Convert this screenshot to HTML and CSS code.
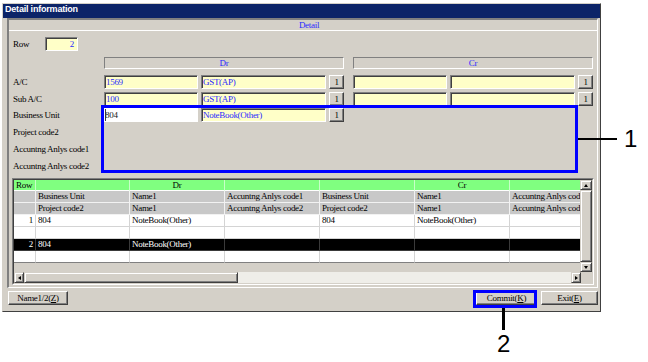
FILE: index.html
```html
<!DOCTYPE html>
<html lang="en">
<head>
  <meta charset="UTF-8">
  <title>Detail information</title>
  <link rel="stylesheet" href="styles.css">
</head>
<body>
  <div class="window">
    <div class="titlebar">Detail information</div>
    <div class="frame">
      <div class="band">Detail</div>
      <div class="form">
        <div class="rowline">
          <span class="rowlbl">Row</span>
          <span class="field yellow num">2</span>
        </div>
        <div class="line heads">
          <span class="label"></span>
          <div class="head">Dr</div>
          <div class="head cr">Cr</div>
        </div>
        <div class="line ac">
          <span class="label">A/C</span>
          <div class="side">
            <span class="field yellow code">1569</span>
            <span class="field yellow name">GST(AP)</span>
            <span class="btn small">1</span>
          </div>
          <div class="side cr">
            <span class="field yellow code"></span>
            <span class="field yellow name"></span>
            <span class="btn small">1</span>
          </div>
        </div>
        <div class="line sub">
          <span class="label">Sub A/C</span>
          <div class="side">
            <span class="field yellow code">100</span>
            <span class="field yellow name">GST(AP)</span>
            <span class="btn small">1</span>
          </div>
          <div class="side cr">
            <span class="field yellow code"></span>
            <span class="field yellow name"></span>
            <span class="btn small">1</span>
          </div>
        </div>
        <div class="line bu">
          <span class="label">Business Unit</span>
          <div class="side">
            <span class="field edit code">804</span>
            <span class="field yellow name">NoteBook(Other)</span>
            <span class="btn small">1</span>
          </div>
        </div>
        <div class="line plain"><span class="label">Project code2</span></div>
        <div class="line plain"><span class="label">Accuntng Anlys code1</span></div>
        <div class="line plain"><span class="label">Accuntng Anlys code2</span></div>
      </div>

      <div class="grid">
        <div class="grid-inner">
          <div class="grid-top">
            <div class="viewport">
              <div class="gr hd"><span>Row</span><span></span><span class="mid">Dr</span><span></span><span></span><span class="mid">Cr</span><span></span></div>
              <div class="gr gy"><span></span><span>Business Unit</span><span>Name1</span><span>Accuntng Anlys code1</span><span>Business Unit</span><span>Name1</span><span>Accuntng Anlys code1</span></div>
              <div class="gr gy"><span></span><span>Project code2</span><span>Name1</span><span>Accuntng Anlys code2</span><span>Project code2</span><span>Name1</span><span>Accuntng Anlys code2</span></div>
              <div class="gr wt"><span class="no">1</span><span>804</span><span>NoteBook(Other)</span><span></span><span>804</span><span>NoteBook(Other)</span><span></span></div>
              <div class="gr wt"><span></span><span></span><span></span><span></span><span></span><span></span><span></span></div>
              <div class="gr bk"><span class="no">2</span><span>804</span><span>NoteBook(Other)</span><span></span><span></span><span></span><span></span></div>
              <div class="gr wt last"><span></span><span></span><span></span><span></span><span></span><span></span><span></span></div>
              <div class="filler"></div>
            </div>
            <div class="vscroll">
              <span class="sbtn"><i class="tri up"></i></span>
              <span class="vthumb"></span>
              <span class="sbtn"><i class="tri down"></i></span>
            </div>
          </div>
          <div class="grid-bottom">
            <div class="hscroll">
              <span class="sbtn"><i class="tri left"></i></span>
              <span class="hthumb"></span>
              <span class="htrack"></span>
              <span class="sbtn"><i class="tri right"></i></span>
            </div>
            <div class="corner"></div>
          </div>
        </div>
      </div>
    </div>

    <div class="actions">
      <span class="btn wide">Name1/2(<u>Z</u>)</span>
      <span class="btn commit">Commit(<u>K</u>)</span>
      <span class="btn exit">Exit(<u>E</u>)</span>
    </div>
  </div>

  <!-- callouts -->
  <div class="callout box-1"></div>
  <div class="lead lead-1"></div>
  <div class="callnum num-1">1</div>
  <div class="callout box-2"></div>
  <div class="lead lead-2"></div>
  <div class="callnum num-2">2</div>
</body>
</html>
```

FILE: styles.css
```css
body {
  margin: 0;
  background: #fff;
  font-family: "Liberation Serif", serif;
  font-size: 9px;
  letter-spacing: -0.3px;
  color: #000;
}

.window {
  margin: 3px 0 0 2px;
  width: 599px;
  height: 309px;
  box-sizing: border-box;
  background: #d4d0c8;
  border: 1px solid;
  border-color: #d4d0c8 #404040 #404040 #d4d0c8;
}

.titlebar {
  height: 14px;
  line-height: 14px;
  padding-left: 2px;
  background: #0c2468;
  color: #fff;
  font: bold 9px "Liberation Sans", sans-serif;
  letter-spacing: -0.2px;
}

.frame {
  margin: 0 2px 0 4px;
  height: 270px;
  box-sizing: border-box;
  border-top: 2px solid #808080;
  border-left: 2px solid #808080;
  border-right: 1px solid #fff;
  border-bottom: 1px solid #fff;
}

.band {
  height: 10px;
  line-height: 10px;
  border-bottom: 1px solid #fff;
  text-align: center;
  padding-left: 12px;
  color: #2a2aff;
}

.form {
  padding: 6px 0 0 4px;
}

.rowline {
  display: flex;
  align-items: center;
  height: 14px;
}

.rowlbl {
  width: 32px;
}

.line {
  display: flex;
  align-items: center;
  height: 14px;
}

.line.heads { margin-top: 6px; height: 12px; }
.line.ac { margin-top: 6px; }
.line.sub { margin-top: 3px; }
.line.bu { margin-top: 2px; }
.line.plain { margin-top: 3px; }

.label {
  width: 91px;
  flex: none;
  white-space: nowrap;
}

.head {
  width: 240px;
  height: 12px;
  line-height: 11px;
  box-sizing: border-box;
  border: 1px solid;
  border-color: #808080 #fff #fff #808080;
  text-align: center;
  color: #2a2aff;
}

.head.cr,
.side.cr {
  margin-left: 9px;
}

.side {
  display: flex;
  gap: 3px;
  width: 240px;
}

.field {
  display: block;
  height: 14px;
  line-height: 12px;
  box-sizing: border-box;
  padding-left: 1px;
  border: 1px solid;
  border-color: #808080 #fff #fff #808080;
  box-shadow: inset 1px 1px #404040;
  color: #2a2aff;
  white-space: nowrap;
  overflow: hidden;
}

.yellow { background: #ffffc8; }

.field.num {
  width: 33px;
  text-align: right;
  padding-right: 3px;
}

.field.code { width: 94px; }
.field.name { width: 125px; }

.field.edit {
  background: #fff;
  color: #222;
  border-color: #fff;
  box-shadow: inset 1px 0 #404040;
  padding-left: 0;
}

.btn {
  display: block;
  box-sizing: border-box;
  height: 14px;
  line-height: 12px;
  text-align: center;
  border: 1px solid;
  border-color: #fff #404040 #404040 #fff;
  box-shadow: inset -1px -1px #808080;
  white-space: nowrap;
}

.btn.small { width: 15px; }

/* grid */
.grid {
  margin: 5px 0 0 3px;
  width: 582px;
  height: 107px;
  box-sizing: border-box;
  border: 1px solid;
  border-color: #808080 #fff #fff #808080;
}

.grid-inner {
  height: 100%;
  box-sizing: border-box;
  border: 1px solid;
  border-color: #404040 #d4d0c8 #d4d0c8 #404040;
  display: flex;
  flex-direction: column;
}

.grid-top {
  display: flex;
  height: 92px;
}

.viewport {
  width: 566px;
  display: flex;
  flex-direction: column;
}

.gr {
  display: flex;
  height: 12px;
  line-height: 11px;
}

.gr span {
  box-sizing: border-box;
  padding-left: 2px;
  border-right: 1px solid;
  border-bottom: 1px solid;
  white-space: nowrap;
  overflow: hidden;
}

.gr span:nth-child(1) { width: 22px; }
.gr span:nth-child(2) { width: 94px; }
.gr span:nth-child(3),
.gr span:nth-child(4),
.gr span:nth-child(5),
.gr span:nth-child(6) { width: 95px; }
.gr span:nth-child(7) { width: 70px; border-right: none; }

.gr .mid { text-align: center; padding-left: 0; }
.gr .no { text-align: right; padding: 0 2px 0 0; }

.gr.hd { height: 11px; line-height: 10px; }
.gr.hd span { background: #80ff80; border-color: #c8ffc8; border-bottom-color: #fff; }
.gr.gy span { background: #c8c8c8; border-color: #f2f2f2; }
.gr.wt span { background: #fff; border-color: #d4d4d4; }
.gr.bk span { background: #000; color: #fff; border-color: #3a3a3a; }
.gr.last span { border-bottom-color: #808080; }

.filler {
  flex: 1;
}

.vscroll {
  width: 12px;
  display: flex;
  flex-direction: column;
}

.sbtn {
  display: flex;
  align-items: center;
  justify-content: center;
  box-sizing: border-box;
  border: 1px solid;
  border-color: #d4d0c8 #404040 #404040 #d4d0c8;
  box-shadow: inset 1px 1px #fff, inset -1px -1px #808080;
}

.vscroll .sbtn { height: 10px; }
.hscroll .sbtn { width: 10px; }

.vthumb {
  flex: 1;
  box-sizing: border-box;
  border: 1px solid;
  border-color: #d4d0c8 #404040 #404040 #d4d0c8;
  box-shadow: inset 1px 1px #fff, inset -1px -1px #808080;
}

.tri {
  width: 0;
  height: 0;
  border: 2px solid transparent;
}

.tri.up { border-bottom: 3px solid #000; border-top-width: 0; }
.tri.down { border-top: 3px solid #000; border-bottom-width: 0; }
.tri.left { border-right: 3px solid #000; border-left-width: 0; }
.tri.right { border-left: 3px solid #000; border-right-width: 0; }

.grid-bottom {
  display: flex;
  height: 11px;
}

.hscroll {
  width: 567px;
  display: flex;
}

.hthumb {
  width: 214px;
  box-sizing: border-box;
  border: 1px solid;
  border-color: #d4d0c8 #404040 #404040 #d4d0c8;
  box-shadow: inset 1px 1px #fff, inset -1px -1px #808080;
}

.htrack {
  flex: 1;
  background: #efeee9;
}

.corner {
  flex: 1;
}

/* bottom buttons */
.actions {
  display: flex;
  margin: 3px 2px 0 5px;
}

.btn.wide { width: 60px; }
.btn.commit { width: 61px; margin-left: auto; }
.btn.exit { width: 57px; margin-left: 4px; }

/* callouts */
.callout {
  position: absolute;
  box-sizing: border-box;
  border: 3px solid #0000ff;
}

.box-1 { left: 101px; top: 105px; width: 477px; height: 68px; }
.box-2 { left: 473px; top: 290px; width: 64px; height: 18px; }

.lead {
  position: absolute;
  background: #000;
}

.lead-1 { left: 578px; top: 138px; width: 39px; height: 2px; }
.lead-2 { left: 502px; top: 308px; width: 3px; height: 22px; }

.callnum {
  position: absolute;
  font: 24px/24px "Liberation Sans", sans-serif;
  letter-spacing: 0;
}

.num-1 { left: 624px; top: 127px; }
.num-2 { left: 497px; top: 332px; }
```
